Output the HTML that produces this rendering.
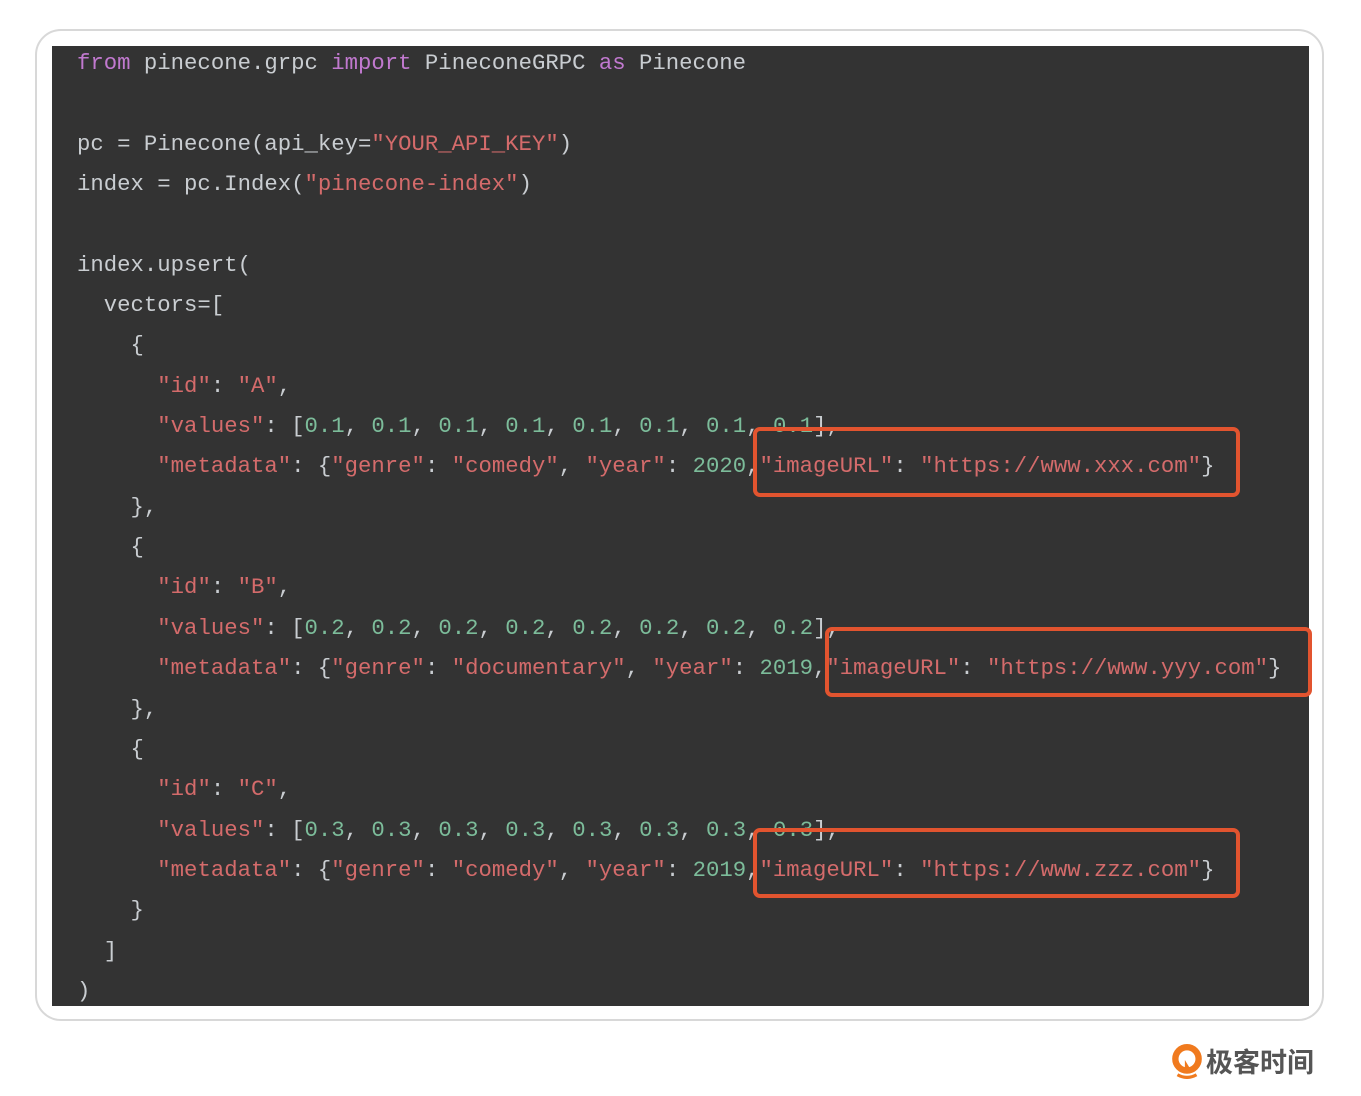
<!DOCTYPE html>
<html><head><meta charset="utf-8"><style>
html,body{margin:0;padding:0;background:#fff;width:1361px;height:1096px;overflow:hidden;position:relative}
.outer{position:absolute;left:35px;top:29px;width:1289px;height:992px;border:2px solid #d8d8d8;border-radius:26px;box-sizing:border-box}
.panel{position:absolute;left:52px;top:46px;width:1257px;height:960px;background:#333333;overflow:hidden}
pre{position:absolute;left:77px;top:43px;margin:0;font-family:"Liberation Mono",monospace;font-size:22.3px;line-height:40.35px;color:#c9cdd1;white-space:pre}
.k{color:#c179cf}.s{color:#d46b6b}.n{color:#7cbc9a}
.box{position:absolute;border:4px solid #e2542f;border-radius:7px;box-sizing:border-box}
.logo{position:absolute;left:1171px;top:1041px;display:flex;align-items:center;font-family:"Noto Sans CJK SC",sans-serif;font-size:27px;font-weight:bold;color:#555}
</style></head><body>
<div class="outer"></div>
<div class="panel"></div>
<pre><span class="k">from</span> pinecone.grpc <span class="k">import</span> PineconeGRPC <span class="k">as</span> Pinecone

pc = Pinecone(api_key=<span class="s">"YOUR_API_KEY"</span>)
index = pc.Index(<span class="s">"pinecone-index"</span>)

index.upsert(
  vectors=[
    {
      <span class="s">"id"</span>: <span class="s">"A"</span>,
      <span class="s">"values"</span>: [<span class="n">0.1</span>, <span class="n">0.1</span>, <span class="n">0.1</span>, <span class="n">0.1</span>, <span class="n">0.1</span>, <span class="n">0.1</span>, <span class="n">0.1</span>, <span class="n">0.1</span>],
      <span class="s">"metadata"</span>: {<span class="s">"genre"</span>: <span class="s">"comedy"</span>, <span class="s">"year"</span>: <span class="n">2020</span>,<span class="s">"imageURL"</span>: <span class="s">"https://www.xxx.com"</span>}
    },
    {
      <span class="s">"id"</span>: <span class="s">"B"</span>,
      <span class="s">"values"</span>: [<span class="n">0.2</span>, <span class="n">0.2</span>, <span class="n">0.2</span>, <span class="n">0.2</span>, <span class="n">0.2</span>, <span class="n">0.2</span>, <span class="n">0.2</span>, <span class="n">0.2</span>],
      <span class="s">"metadata"</span>: {<span class="s">"genre"</span>: <span class="s">"documentary"</span>, <span class="s">"year"</span>: <span class="n">2019</span>,<span class="s">"imageURL"</span>: <span class="s">"https://www.yyy.com"</span>}
    },
    {
      <span class="s">"id"</span>: <span class="s">"C"</span>,
      <span class="s">"values"</span>: [<span class="n">0.3</span>, <span class="n">0.3</span>, <span class="n">0.3</span>, <span class="n">0.3</span>, <span class="n">0.3</span>, <span class="n">0.3</span>, <span class="n">0.3</span>, <span class="n">0.3</span>],
      <span class="s">"metadata"</span>: {<span class="s">"genre"</span>: <span class="s">"comedy"</span>, <span class="s">"year"</span>: <span class="n">2019</span>,<span class="s">"imageURL"</span>: <span class="s">"https://www.zzz.com"</span>}
    }
  ]
)</pre>
<div class="box" style="left:753px;top:427px;width:487px;height:70px"></div>
<div class="box" style="left:825px;top:627px;width:487px;height:70px"></div>
<div class="box" style="left:753px;top:828px;width:487px;height:70px"></div>
<div class="logo">
<svg width="32" height="36" viewBox="0 0 30 34"><circle cx="15" cy="15" r="11" fill="none" stroke="#f07a1e" stroke-width="6"/><path d="M13 16 L13 26 L19 26 Z" fill="#f07a1e"/><path d="M6 30 Q15 35 24 30" fill="none" stroke="#f07a1e" stroke-width="3"/></svg>
<span style="margin-left:3px">极客时间</span>
</div>
</body></html>
